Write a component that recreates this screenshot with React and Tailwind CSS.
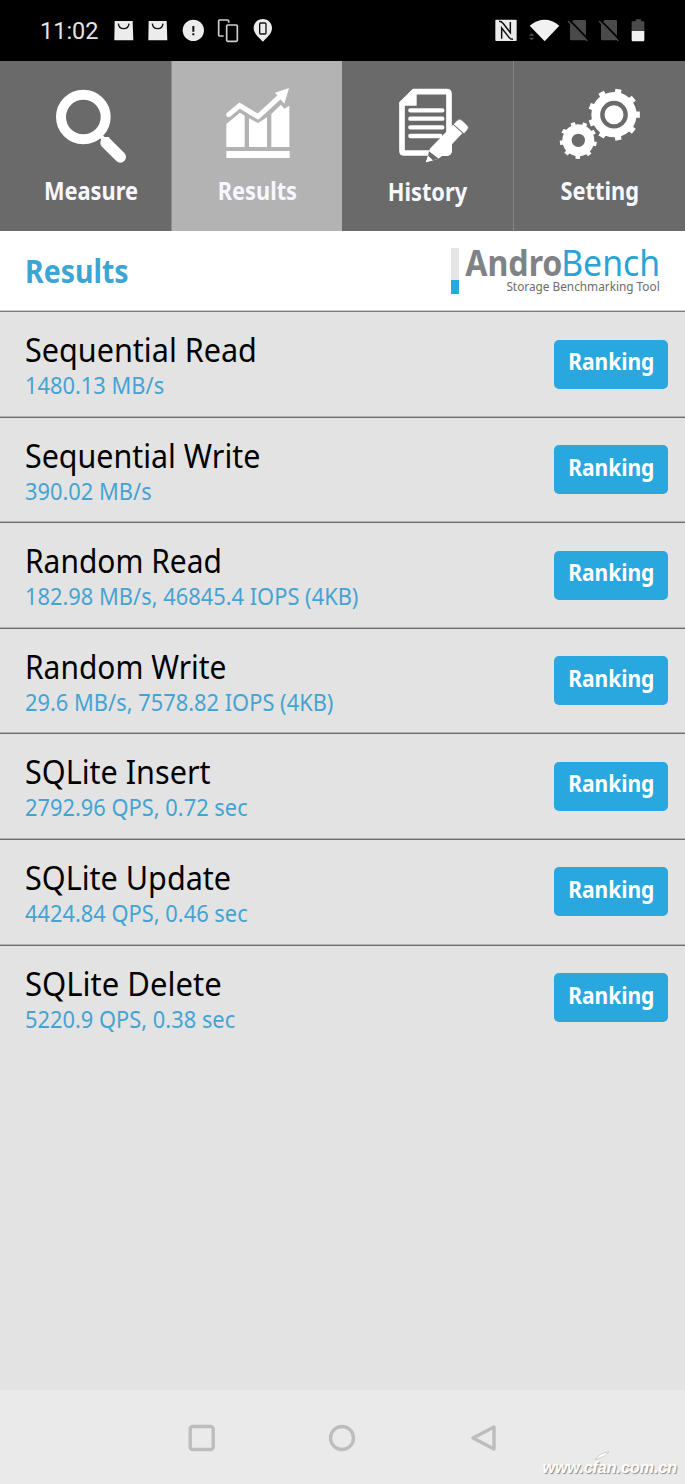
import React from 'react';

const results = [
  { id: 1, name: 'Sequential Read', value: '1480.13 MB/s', fit: 'scale-x-[0.955]' },
  { id: 2, name: 'Sequential Write', value: '390.02 MB/s', fit: 'scale-x-[0.95]' },
  { id: 3, name: 'Random Read', value: '182.98 MB/s, 46845.4 IOPS (4KB)', fit: 'scale-x-[0.935]' },
  { id: 4, name: 'Random Write', value: '29.6 MB/s, 7578.82 IOPS (4KB)', fit: 'scale-x-[0.935]' },
  { id: 5, name: 'SQLite Insert', value: '2792.96 QPS, 0.72 sec', fit: 'scale-x-[0.955]' },
  { id: 6, name: 'SQLite Update', value: '4424.84 QPS, 0.46 sec', fit: 'scale-x-[0.955]' },
  { id: 7, name: 'SQLite Delete', value: '5220.9 QPS, 0.38 sec', fit: 'scale-x-[0.97]' },
];

// Outline of a cog wheel: flat teeth around a round body
const gearPath = (cx, cy, outer, inner, teeth, offset) => {
  const step = (Math.PI * 2) / teeth;
  const point = (r, a) => `${(cx + r * Math.cos(a)).toFixed(1)} ${(cy - r * Math.sin(a)).toFixed(1)}`;
  let d = '';
  for (let i = 0; i < teeth; i++) {
    const a = (offset * Math.PI) / 180 + i * step;
    d += `${i === 0 ? 'M' : 'L'}${point(inner, a - step * 0.2)}`;
    d += `L${point(outer, a - step * 0.17)}L${point(outer, a + step * 0.17)}`;
    d += `L${point(inner, a + step * 0.2)}`;
    d += `A${inner} ${inner} 0 0 0 ${point(inner, a + step * 0.8)}`;
  }
  return d + 'Z';
};

const BagIcon = () => (
  <svg className="w-5 h-[25px]" viewBox="0 0 60 75">
    <path d="M2 9h54l2 58H1z" fill="#ececec" />
    <path d="M13 17c2 20 30 20 32 0" fill="none" stroke="#111" strokeWidth="4" />
  </svg>
);

const SimIcon = () => (
  <svg className="w-[22px] h-[25px]" viewBox="0 0 66 75">
    <path d="M20 6h33q4 0 4 4v53q0 4-4 4H14q-5 0-5-5V17z" fill="#4a4a4a" />
    <path d="M6 5l58 59" stroke="#000" strokeWidth="5" />
    <path d="M3 9l58 60" stroke="#4a4a4a" strokeWidth="4" />
  </svg>
);

const StatusBar = () => (
  <div className="h-[61px] bg-black flex items-center justify-between pl-10 pr-10">
    <div className="flex items-center">
      <span className="w-[74px] pt-px font-[Roboto] text-[23.5px] leading-7 text-[#e4e4e4] whitespace-nowrap">11:02</span>
      <div className="flex items-center gap-[14px]">
        <BagIcon />
        <BagIcon />
        <svg className="w-[23px] h-[25px]" viewBox="0 0 69 75">
          <circle cx="34" cy="37" r="32" fill="#ececec" />
          <path d="M34 24v17M34 46v6" stroke="#111" strokeWidth="6" />
        </svg>
        <svg className="-ml-0.5 w-[22px] h-[25px]" viewBox="0 0 66 75" fill="none" stroke="#cfcfcf" strokeWidth="5">
          <path d="M20 54H8q-3 0-3-3V9q0-3 3-3h24q3 0 3 3v5" />
          <rect x="29" y="21" width="32" height="49" rx="3" />
        </svg>
        <svg className="w-5 h-[25px]" viewBox="0 0 60 75">
          <path d="M30 3C14 3 2 15 2 30c0 17 16 28 28 41 12-13 27-24 27-41C57 15 45 3 30 3z" fill="#ececec" />
          <rect x="20" y="15" width="19" height="33" rx="3" fill="none" stroke="#111" strokeWidth="4" />
        </svg>
      </div>
    </div>
    <div className="flex items-center">
      <svg className="w-[22px] h-[25px]" viewBox="0 0 66 75">
        <rect x="1" y="5" width="64" height="64" rx="3" fill="#ececec" />
        <path d="M12 10q8 0 12 6l22 28V12M54 64q-8 0-12-6L20 30v32" fill="none" stroke="#111" strokeWidth="4.5" />
      </svg>
      <svg className="ml-[11px] w-8 h-[25px]" viewBox="0 0 96 75">
        <path d="M5 23Q50-12 94 23L50 70z" fill="#f2f2f2" />
        <path d="M3 53l8-8 8 8zM3 59l8 8 8-8z" fill="#4a4a4a" />
      </svg>
      <div className="ml-[7px] flex gap-[9px]">
        <SimIcon />
        <SimIcon />
      </div>
      <svg className="ml-[11px] w-[14px] h-[25px]" viewBox="0 0 42 75">
        <path d="M14 4h16v6h7q3 0 3 3v26H2V13q0-3 3-3h9z" fill="#4a4a4a" />
        <path d="M2 39h38v28q0 3-3 3H5q-3 0-3-3z" fill="#f2f2f2" />
      </svg>
    </div>
  </div>
);

const MeasureIcon = () => (
  <svg className="w-[172px] h-[113px] shrink-0" viewBox="0 3 516 339">
    <circle cx="250" cy="171" r="67" fill="none" stroke="#fff" strokeWidth="30" />
    <path d="M298 224l16 16" stroke="#fff" strokeWidth="12" />
    <path d="M318 248l43 43" stroke="#fff" strokeWidth="34" strokeLinecap="round" />
    <path d="M303 238l9-7h17l-22 28-4-6z" fill="#fff" />
  </svg>
);

const ResultsIcon = () => (
  <svg className="w-[170px] h-[113px] shrink-0" viewBox="6 3 510 339" fill="#fff">
    <path d="M169 192l41-34 14 9v94h-55zM237 175l27 14 27-17v89h-54zM304 162l29-28 10 12 15-9v124h-54z" />
    <path d="M169 273h190v21H169z" />
    <path d="M176 164l33-27 55 33 72-66" fill="none" stroke="#fff" strokeWidth="15" strokeLinecap="round" />
    <path d="M357 84l-14 47-28-33z" />
  </svg>
);

const HistoryIcon = () => (
  <svg className="w-[171px] h-[113px] shrink-0" viewBox="0 3 513 339">
    <path d="M216 95h98q7 0 7 7v170q0 7-7 7H187q-7 0-7-7V130z" fill="none" stroke="#fff" strokeWidth="17" />
    <path d="M173 137v-9l41-41h10v50z" fill="#fff" />
    <path d="M205 151h96M205 176h96M205 202h96M205 228h90" stroke="#fff" strokeWidth="13" strokeLinecap="round" />
    {/* Pencil */}
    <path d="M262 268l71-74 28 26-31 33v23l-12 12h-18l-12 9z" fill="#fff" />
    <path d="M262 272l28 24-38 11z" fill="#fff" />
    <path d="M261 274l29 22-18 5-14-13z" fill="#6a6a6a" />
    <path d="M259 288l13 13-21 6z" fill="#fff" />
    <path d="M344 182q8-8 16-1l15 14q8 7 1 15l-10 11-32-28z" fill="#fff" stroke="#6a6a6a" strokeWidth="2" />
  </svg>
);

const SettingIcon = () => (
  <svg className="w-[171px] h-[113px] shrink-0" viewBox="6 3 513 339">
    <path d={gearPath(306, 164, 78, 68, 9, 0)} fill="#fff" />
    <circle cx="306" cy="164" r="35" fill="none" stroke="#6a6a6a" strokeWidth="13" />
    <path
      fillRule="evenodd"
      d={`${gearPath(199, 241, 56, 48, 9, 28)}M219 241a20 20 0 1 0-40 0a20 20 0 1 0 40 0Z`}
      fill="#fff"
    />
  </svg>
);

const tabs = [
  { label: 'Measure', icon: MeasureIcon, style: 'bg-[#6a6a6a] border-r border-[#8e8e8e]', text: 'pl-[14px]' },
  { label: 'Results', icon: ResultsIcon, style: 'bg-[#b3b3b3]', text: '' },
  { label: 'History', icon: HistoryIcon, style: 'bg-[#6a6a6a] border-r border-[#858585]', text: 'pt-px' },
  { label: 'Setting', icon: SettingIcon, style: 'bg-[#6a6a6a]', text: 'pl-px' },
];

const TabBar = () => (
  <div className="h-[170px] grid grid-cols-[172px_170px_172px_171px]">
    {tabs.map(({ label, icon: Icon, style, text }) => (
      <div key={label} className={`flex flex-col items-center overflow-hidden ${style}`}>
        <Icon />
        <span className={`${text} scale-x-[0.855] text-[25.5px] leading-8 font-bold text-[#f7f7ff]`}>{label}</span>
      </div>
    ))}
  </div>
);

const Header = () => (
  <div className="h-[81px] bg-white border-b border-[#7a7a7a] shadow-[inset_0_-1px_0_#cfcfcf] flex justify-between pl-[25px] pr-[25px]">
    <h1 className="mt-5 origin-left scale-x-[0.89] text-[32px] leading-10 font-bold text-[#3ba5d6]">Results</h1>
    <div className="mt-[17px] flex">
      <div className="w-2 h-[46px] flex flex-col bg-[#e6e6e6] justify-end">
        <div className="h-[14px] bg-[#29a8dc]" />
      </div>
      <div className="w-[201px] flex flex-col items-end">
        <div className="h-8 flex text-[35.5px] leading-[29px] whitespace-nowrap">
          <span className="origin-right scale-x-[0.905] font-bold text-[#808285]">Andro</span>
          <span className="w-[98px] flex justify-end">
            <span className="origin-right scale-x-[0.95] text-[#29a4d6]">Bench</span>
          </span>
        </div>
        <span className="origin-right scale-x-[0.96] text-[12.3px] leading-[14px] text-[#6d6d6d] whitespace-nowrap">
          Storage Benchmarking Tool
        </span>
      </div>
    </div>
  </div>
);

const ResultRow = ({ name, value, fit, last }) => (
  <div
    className={`h-[105.6px] flex justify-between pl-[25px] pr-[17px] ${
      last ? '' : 'border-b border-[#6c6c6c] shadow-[inset_0_-1px_0_#b4b4b4]'
    }`}
  >
    <div className="flex flex-col items-start pt-[18px] whitespace-nowrap">
      <span className={`origin-left ${fit} text-[32px] leading-[40px] text-black`}>{name}</span>
      <span className="origin-left scale-x-[0.95] text-[23px] leading-[30px] text-[#45a3d3]">{value}</span>
    </div>
    <button className="mt-[27.5px] w-[114px] h-[49px] rounded-[5px] bg-[#29a8e0] flex justify-center items-start pt-[3.5px]">
      <span className="scale-x-[0.875] text-2xl leading-9 font-bold text-white">Ranking</span>
    </button>
  </div>
);

const NavBar = () => (
  <div className="h-[94px] pt-px bg-[#eaeaea] flex items-center pl-[188px] gap-[113px] text-[#bdbdbd]">
    <svg className="w-7 h-7" viewBox="0 0 28 28" fill="none" stroke="currentColor" strokeWidth="3.4">
      <rect x="2.2" y="2.5" width="23" height="23" rx="2.5" />
    </svg>
    <svg className="w-7 h-7" viewBox="0 0 28 28" fill="none" stroke="currentColor" strokeWidth="3.4">
      <circle cx="13" cy="14" r="11.5" />
    </svg>
    <svg className="w-7 h-7" viewBox="0 0 28 28" fill="none" stroke="currentColor" strokeWidth="3.4" strokeLinejoin="round">
      <path d="M24 3v22L3 14z" />
    </svg>
  </div>
);

const Watermark = () => (
  <div className="absolute right-[8px] bottom-[6px] font-['Liberation_Sans'] text-base leading-5 font-bold italic text-white [text-shadow:1px_1px_1px_#8a8a8a]">
    www.cfan.com.cn
    <svg className="absolute left-[50px] -top-2 w-5 h-3" viewBox="0 0 20 12">
      <path d="M3 10Q7 3 17 2q-4 5-12 7z" fill="#fff" stroke="#b5b5b5" strokeWidth="0.6" />
    </svg>
  </div>
);

const App = () => {
  return (
    <div className="relative w-[685px] h-[1484px] overflow-hidden flex flex-col bg-[#e3e3e3] font-['Noto_Sans',sans-serif]">
      <StatusBar />
      <TabBar />
      <Header />
      <div className="flex-1">
        {results.map((result, index) => (
          <ResultRow
            key={result.id}
            name={result.name}
            value={result.value}
            fit={result.fit}
            last={index === results.length - 1}
          />
        ))}
      </div>
      <NavBar />
      <Watermark />
    </div>
  );
};

export default App;
